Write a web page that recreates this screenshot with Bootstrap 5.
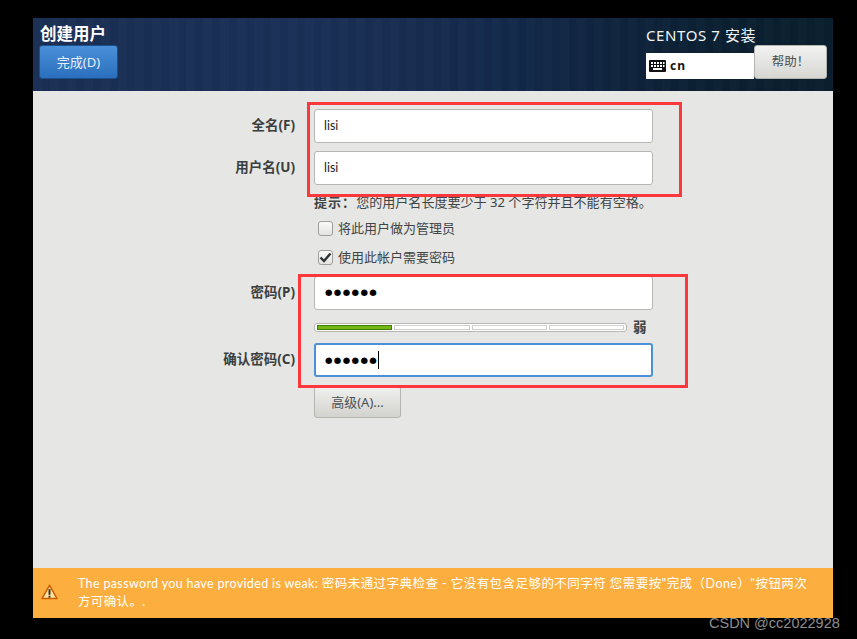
<!DOCTYPE html>
<html lang="zh-CN">
<head>
<meta charset="utf-8">
<title>创建用户</title>
<link href="https://cdn.jsdelivr.net/npm/bootstrap@5.3.0/dist/css/bootstrap.min.css" rel="stylesheet">
<style>
html,body{height:100%;}
body{background:#000;font-family:"Noto Sans","Noto Sans CJK SC",sans-serif;color:#2e3436;font-size:13px;overflow:hidden;}
.stage{padding:18px 0 0 33px;height:639px;}
.screen{width:800px;height:600px;background:#e6e6e4;position:relative;}
.topbar{height:73px;background:repeating-linear-gradient(90deg,rgba(255,255,255,.01) 0 9px,rgba(0,0,0,.02) 9px 17px),linear-gradient(90deg,#1a2f54 0%,#1a3056 35%,#13294a 60%,#0b2032 85%,#0a1f2e 100%);padding:0 6px 0 6px;}
.top-title{color:#fff;font-size:16.5px;font-weight:700;line-height:20px;padding-top:6px;height:27px;padding-left:1px;}
.done-btn{width:79px;height:34px;background:linear-gradient(#4a90d9,#2a6fbd);border:1px solid #1d4f8c;border-radius:3px;color:#e8eef6;font-size:13px;line-height:30px;text-align:center;padding:0;}
.top-right{width:181px;}
.os-name{color:#f2f4f6;font-size:15px;line-height:20px;padding-top:7px;height:35px;letter-spacing:.6px;}
.kbd-box{background:#fff;width:108px;height:26px;padding-left:3px;gap:4px;color:#111;font-weight:700;font-size:12px;letter-spacing:1px;}
.help-btn{width:73px;height:34px;margin-top:-8px;background:linear-gradient(#f2f2f0,#d6d6d3);border:1px solid #b4b4b0;border-radius:3px;color:#4a4f50;font-size:12.5px;line-height:32px;padding:0;text-align:center;position:relative;}
.form-area{padding:18px 0 0 0;}
.form-line{display:flex;}
.lbl{width:262px;text-align:right;font-weight:700;font-size:13.5px;color:#3a3f40;line-height:32px;}
.fld{margin-left:19px;width:339px;}
.entry{height:34px;background:#fff;border:1px solid #b7b6b2;border-radius:3px;padding:0 9px;line-height:31px;font-size:12.5px;color:#1f2324;font-family:"Lato","Noto Sans",sans-serif;}
.entry-focus{border:2px solid #4a90d9;padding:0 8px;line-height:30px;display:flex;align-items:center;}
.dots{font-size:8.6px;letter-spacing:1.35px;color:#000;font-weight:700;font-family:"DejaVu Sans",sans-serif;padding-left:10px;}
.entry-focus.dots{padding-left:9px;}
.caret-bar{display:inline-block;width:1px;height:18px;background:#000;margin-left:0;}
.hint{margin:8px 0 0 281px;font-size:13.05px;line-height:18px;color:#3f4445;white-space:nowrap;}
.hint b{letter-spacing:1px;}
.tick-line{margin-left:285px;height:18px;gap:5px;font-size:13px;line-height:18px;color:#3f4445;}
.tick{width:15px;height:15px;background:linear-gradient(#fafafa,#e3e3e1);border:1px solid #9f9f9b;border-radius:3px;display:flex;align-items:center;justify-content:center;}
.meter-line{margin:12px 0 0 281px;height:10px;}
.meter{width:313px;height:9px;background:#fff;border:1px solid #b7b6b2;border-radius:3px;padding:1px 2px;gap:2px;display:flex;}
.seg{flex:1;height:5px;border:1px solid #cfcfcd;background:#fff;}
.seg-on{background:#73b816;border-color:#3f7f08;}
.weak{margin-left:6px;font-size:13.5px;font-weight:700;line-height:10px;color:#3f4445;}
.adv-btn{width:87px;height:32px;margin:9px 0 0 281px;display:block;background:linear-gradient(#f0f0ee,#d2d2cf);border:1px solid #b4b4b0;border-radius:3px;color:#4a4f50;font-size:13px;line-height:26px;padding:0;text-align:center;}
.warnbar{position:absolute;left:0;right:0;bottom:0;height:50px;background:#fcaf3e;color:#fff;font-size:12.5px;line-height:18px;padding:7px 0 0 45px;font-family:"Lato","Noto Sans","Noto Sans CJK SC",sans-serif;letter-spacing:.35px;}
.warn-cjk{letter-spacing:.45px;}
.warn-ico{position:absolute;left:8px;top:16px;}
.redbox{position:absolute;border:3px solid #fd383c;pointer-events:none;}
.redbox-a{left:274px;top:84px;width:375px;height:95px;}
.redbox-b{left:265px;top:256px;width:390px;height:114px;}
.mark-w{position:absolute;left:709px;top:614px;color:#8d8d8d;font-family:"Liberation Sans",sans-serif;font-size:14.5px;line-height:18px;white-space:nowrap;}
</style>
</head>
<body>
<div class="stage">
  <div class="screen">
    <div class="topbar d-flex justify-content-between">
      <div>
        <div class="top-title">创建用户</div>
        <button type="button" class="done-btn">完成(D)</button>
      </div>
      <div class="top-right">
        <div class="os-name">CENTOS 7 安装</div>
        <div class="d-flex">
          <div class="kbd-box d-flex align-items-center">
            <svg width="17" height="12" viewBox="0 0 17 12"><rect width="17" height="12" rx="1" fill="#111"/><g fill="#fff"><rect x="2" y="2" width="2" height="2"/><rect x="5" y="2" width="2" height="2"/><rect x="8" y="2" width="2" height="2"/><rect x="11" y="2" width="2" height="2"/><rect x="14" y="2" width="1.5" height="2"/><rect x="2" y="5" width="2" height="2"/><rect x="5" y="5" width="2" height="2"/><rect x="8" y="5" width="2" height="2"/><rect x="11" y="5" width="2" height="2"/><rect x="14" y="5" width="1.5" height="2"/><rect x="4" y="8" width="9" height="2"/></g></svg>
            <span>cn</span>
          </div>
          <button type="button" class="help-btn">帮助！</button>
        </div>
      </div>
    </div>
    <div class="form-area">
      <div class="form-line"><div class="lbl">全名(F)</div><div class="fld"><div class="entry">lisi</div></div></div>
      <div class="form-line mt-2"><div class="lbl">用户名(U)</div><div class="fld"><div class="entry">lisi</div></div></div>
      <div class="hint"><b>提示：</b>您的用户名长度要少于 32 个字符并且不能有空格。</div>
      <div class="tick-line d-flex align-items-center" style="margin-top:8px"><span class="tick"></span><span>将此用户做为管理员</span></div>
      <div class="tick-line d-flex align-items-center" style="margin-top:11px"><span class="tick"><svg width="13" height="11" viewBox="0 0 13 11"><path d="M1.5 5.5 5 9 11.5 1.5" fill="none" stroke="#2e3436" stroke-width="2.4"/></svg></span><span>使用此帐户需要密码</span></div>
      <div class="form-line" style="margin-top:10px"><div class="lbl">密码(P)</div><div class="fld"><div class="entry dots">●●●●●●</div></div></div>
      <div class="meter-line d-flex align-items-center">
        <div class="meter"><span class="seg seg-on"></span><span class="seg"></span><span class="seg"></span><span class="seg"></span></div>
        <span class="weak">弱</span>
      </div>
      <div class="form-line" style="margin-top:11px"><div class="lbl">确认密码(C)</div><div class="fld"><div class="entry entry-focus dots">●●●●●●<span class="caret-bar"></span></div></div></div>
      <button type="button" class="adv-btn">高级(A)...</button>
    </div>
    <div class="warnbar">
      <svg class="warn-ico" width="17" height="16" viewBox="0 0 18 16"><path d="M9 1 17 15H1Z" fill="#f9e4a8" stroke="#ce5c00" stroke-width="1.6" stroke-linejoin="round"/><rect x="8" y="5" width="2" height="6" fill="#3a2a10"/><rect x="8" y="12" width="2" height="2" fill="#3a2a10"/></svg>
      The password you have provided is weak: <span class="warn-cjk">密码未通过字典检查 - 它没有包含足够的不同字符 您需要按"完成（Done）"按钮两次</span><br>方可确认。.
    </div>
    <div class="redbox redbox-a"></div>
    <div class="redbox redbox-b"></div>
  </div>
</div>
<div class="mark-w">CSDN @cc2022928</div>
<script src="https://cdn.jsdelivr.net/npm/bootstrap@5.3.0/dist/js/bootstrap.bundle.min.js"></script>
</body>
</html>
